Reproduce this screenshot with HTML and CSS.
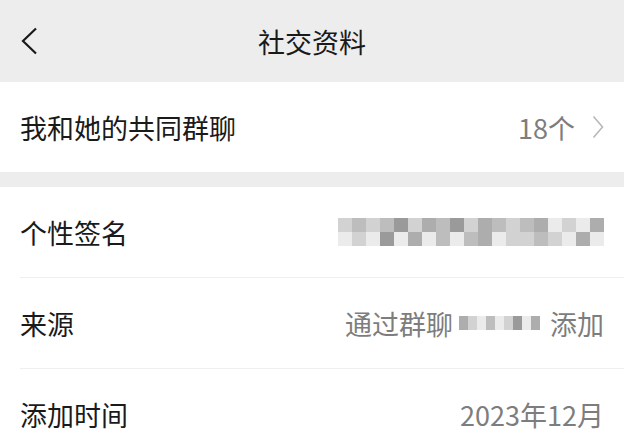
FILE: index.html
```html
<!DOCTYPE html>
<html lang="zh-CN">
<head>
    <meta charset="UTF-8">
    <meta name="viewport" content="width=device-width, initial-scale=1.0">
    <title>社交资料</title>
    <link rel="stylesheet" href="styles.css">
</head>
<body>
    <header class="topbar">
        <span class="back">
            <svg width="18" height="28" viewBox="0 0 18 28">
                <path d="M16 1.5 L3 14 L16 26.5" fill="none" stroke="#1a1a1a" stroke-width="2.2"/>
            </svg>
        </span>
        <h1>社交资料</h1>
        <span class="spacer"></span>
    </header>

    <section class="group">
        <div class="row">
            <span class="label">我和她的共同群聊</span>
            <span class="value">18个
                <svg class="arrow" width="12" height="24" viewBox="0 0 12 24">
                    <path d="M1.5 1.5 L10.5 12 L1.5 22.5" fill="none" stroke="#b8b8b8" stroke-width="1.6"/>
                </svg>
            </span>
        </div>
    </section>

    <section class="group">
        <div class="row">
            <span class="label">个性签名</span>
            <span class="value">
                <span class="mosaic sign">
                    <i class="m3"></i><i class="m2"></i><i class="m3"></i><i class="m2"></i><i class="m1"></i><i class="m3"></i><i class="m4"></i><i class="m2"></i><i class="m1"></i><i class="m3"></i><i class="m4"></i><i class="m2"></i><i class="m3"></i><i class="m2"></i><i class="m4"></i><i class="m5"></i><i class="m3"></i><i class="m5"></i><i class="m4"></i>
                    <i class="m5"></i><i class="m3"></i><i class="m5"></i><i class="m1"></i><i class="m5"></i><i class="m4"></i><i class="m5"></i><i class="m2"></i><i class="m5"></i><i class="m2"></i><i class="m4"></i><i class="m5"></i><i class="m3"></i><i class="m3"></i><i class="m2"></i><i class="m3"></i><i class="m5"></i><i class="m4"></i><i class="m5"></i>
                </span>
            </span>
        </div>
        <div class="row">
            <span class="label">来源</span>
            <span class="value">通过群聊
                <span class="mosaic group-name"><i class="m4"></i><i class="m3"></i><i class="m5"></i><i class="m2"></i><i class="m5"></i><i class="m3"></i><i class="m1"></i><i class="m5"></i><i class="m4"></i></span>
                添加</span>
        </div>
        <div class="row">
            <span class="label">添加时间</span>
            <span class="value">2023年12月</span>
        </div>
    </section>
</body>
</html>
```

FILE: styles.css
```css
body {
    margin: 0;
    background-color: #ededed;
    font-family: "Noto Sans CJK SC", "Noto Sans", sans-serif;
    color: #1a1a1a;
    width: 624px;
    height: 448px;
    overflow: hidden;
}

.topbar {
    height: 82px;
    display: flex;
    align-items: center;
    justify-content: space-between;
    padding: 0 20px;
    background-color: #ededed;
}

    .topbar h1 {
        margin: 0;
        font-size: 27px;
        font-weight: normal;
    }

.back, .spacer {
    width: 18px;
    display: flex;
    align-items: center;
}

.group {
    background-color: #fff;
    padding-left: 20px;
    margin-bottom: 15px;
}

.row {
    height: 90px;
    display: flex;
    align-items: center;
    justify-content: space-between;
    padding-right: 20px;
}

    .row + .row {
        border-top: 1px solid #efefef;
    }

.label {
    font-size: 27px;
}

.value {
    font-size: 27px;
    color: #7d7d7d;
    display: flex;
    align-items: center;
}

.arrow {
    margin-left: 17px;
}

/* pixelated (hidden) text */
.mosaic {
    display: flex;
    flex-wrap: wrap;
}

    .mosaic i {
        display: block;
        flex: none;
    }

.sign {
    width: 266px;
    height: 28px;
}

    .sign i {
        width: 14px;
        height: 14px;
    }

.group-name {
    width: 81px;
    height: 14px;
    margin: 0 10px 0 6px;
}

    .group-name i {
        width: 9px;
        height: 14px;
    }

.m1 { background-color: #9a9a9a; }
.m2 { background-color: #bdbdbd; }
.m3 { background-color: #d2d2d2; }
.m4 { background-color: #adadad; }
.m5 { background-color: #ebebeb; }
```
